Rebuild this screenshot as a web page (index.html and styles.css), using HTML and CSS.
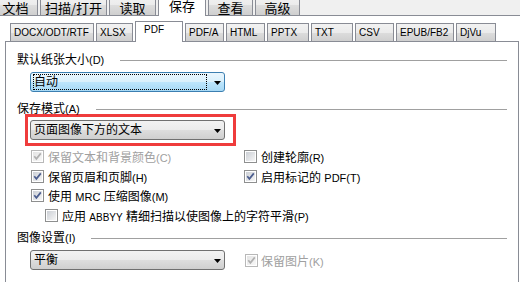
FILE: index.html
```html
<!DOCTYPE html>
<html lang="zh-CN">
<head>
    <meta charset="UTF-8">
    <title>选项 - 保存 - PDF</title>
    <link rel="stylesheet" href="styles.css">
</head>
<body>
    <div class="top-tabs">
        <div class="top-tab t-doc">文档</div>
        <div class="top-tab t-scan">扫描/打开</div>
        <div class="top-tab t-read">读取</div>
        <div class="top-tab t-save active">保存</div>
        <div class="top-tab t-view">查看</div>
        <div class="top-tab t-adv">高级</div>
    </div>

    <div class="sub-tabs">
        <div class="sub-tab s-docx">DOCX/ODT/RTF</div>
        <div class="sub-tab s-xlsx">XLSX</div>
        <div class="sub-tab s-pdf active">PDF</div>
        <div class="sub-tab s-pdfa">PDF/A</div>
        <div class="sub-tab s-html">HTML</div>
        <div class="sub-tab s-pptx">PPTX</div>
        <div class="sub-tab s-txt">TXT</div>
        <div class="sub-tab s-csv">CSV</div>
        <div class="sub-tab s-epub">EPUB/FB2</div>
        <div class="sub-tab s-djvu">DjVu</div>
    </div>

    <div class="panel">
        <div class="group-title title-paper"><span>默认纸张大小<span class="en">(D)</span></span></div>
        <div class="combo focused">
            <span class="combo-text"><span class="focus-rect">自动</span></span>
            <svg class="arrow" width="7" height="4" viewBox="0 0 7 4"><polygon points="0,0 7,0 3.5,4" fill="#000"/></svg>
        </div>

        <div class="group-title title-mode"><span>保存模式<span class="en">(A)</span></span></div>
        <div class="highlight">
            <div class="combo">
                <span class="combo-text">页面图像下方的文本</span>
                <svg class="arrow" width="7" height="4" viewBox="0 0 7 4"><polygon points="0,0 7,0 3.5,4" fill="#000"/></svg>
            </div>
        </div>

        <div class="options">
            <div class="col">
                <div class="check disabled">
                    <span class="box"><svg class="tick" width="9" height="9" viewBox="0 0 9 9"><path d="M1.3 4.2 L3.4 6.9 L7.8 1.4" fill="none" stroke="currentColor" stroke-width="1.7"/></svg></span>
                    <span>保留文本和背景颜色<span class="en">(C)</span></span>
                </div>
                <div class="check">
                    <span class="box"><svg class="tick" width="9" height="9" viewBox="0 0 9 9"><path d="M1.3 4.2 L3.4 6.9 L7.8 1.4" fill="none" stroke="currentColor" stroke-width="1.7"/></svg></span>
                    <span>保留页眉和页脚<span class="en">(H)</span></span>
                </div>
                <div class="check row-short">
                    <span class="box"><svg class="tick" width="9" height="9" viewBox="0 0 9 9"><path d="M1.3 4.2 L3.4 6.9 L7.8 1.4" fill="none" stroke="currentColor" stroke-width="1.7"/></svg></span>
                    <span>使用 <span class="en">MRC</span> 压缩图像<span class="en">(M)</span></span>
                </div>
                <div class="check nested">
                    <span class="box"></span>
                    <span>应用 <span class="en small">ABBYY</span> 精细扫描以使图像上的字符平滑<span class="en">(P)</span></span>
                </div>
            </div>
            <div class="col">
                <div class="check">
                    <span class="box"></span>
                    <span>创建轮廓<span class="en">(R)</span></span>
                </div>
                <div class="check">
                    <span class="box"><svg class="tick" width="9" height="9" viewBox="0 0 9 9"><path d="M1.3 4.2 L3.4 6.9 L7.8 1.4" fill="none" stroke="currentColor" stroke-width="1.7"/></svg></span>
                    <span>启用标记的 <span class="en">PDF(T)</span></span>
                </div>
            </div>
        </div>

        <div class="group-title title-image"><span>图像设置<span class="en">(I)</span></span></div>
        <div class="image-row">
            <div class="combo">
                <span class="combo-text">平衡</span>
                <svg class="arrow" width="7" height="4" viewBox="0 0 7 4"><polygon points="0,0 7,0 3.5,4" fill="#000"/></svg>
            </div>
            <div class="check disabled">
                <span class="box"><svg class="tick" width="9" height="9" viewBox="0 0 9 9"><path d="M1.3 4.2 L3.4 6.9 L7.8 1.4" fill="none" stroke="currentColor" stroke-width="1.7"/></svg></span>
                <span>保留图片<span class="en">(K)</span></span>
            </div>
        </div>
    </div>
</body>
</html>
```

FILE: styles.css
```css
body {
    margin: 0;
    width: 520px;
    height: 283px;
    overflow: hidden;
    background-color: #fff;
    color: #000;
    font-family: "Liberation Sans", "Noto Sans CJK SC", sans-serif;
    font-size: 12px;
}
.en {
    font-size: 11px;
}
.en.small {
    font-size: 10px;
}

/* top level tabs */
.top-tabs {
    display: flex;
    align-items: flex-end;
    gap: 2px;
    height: 15px;
    background-color: #f0f0f0;
    border-bottom: 1px solid #898c95;
}
.top-tab {
    box-sizing: border-box;
    flex: none;
    height: 20px;
    display: flex;
    align-items: flex-end;
    justify-content: center;
    border: 1px solid #898c95;
    border-bottom: none;
    background: linear-gradient(#f2f2f2, #ebebeb 50%, #dddddd 50%, #cfcfcf);
    font-family: "Noto Sans CJK SC", sans-serif;
    font-size: 13px;
    line-height: 15px;
}
.top-tab.active {
    height: 22px;
    margin-bottom: -1px;
    padding-bottom: 3px;
    background: #fff;
}
.t-doc { width: 45px; margin-left: -7px; }
.t-scan { width: 67px; }
.t-read { width: 47px; }
.t-save { width: 48px; }
.t-view { width: 45px; }
.t-adv { width: 45px; }

/* format tabs */
.sub-tabs {
    display: flex;
    align-items: flex-end;
    gap: 2px;
    height: 26px;
    margin-left: 5px;
    width: 514px;
    box-sizing: border-box;
    padding-left: 5px;
    border-bottom: 1px solid #898c95;
}
.sub-tab {
    box-sizing: border-box;
    flex: none;
    height: 18px;
    padding: 2px 0 1px 3px;
    border: 1px solid #898c95;
    border-bottom: none;
    background: linear-gradient(#f2f2f2, #ebebeb 50%, #dddddd 50%, #cfcfcf);
    font-size: 10px;
    line-height: 14px;
    white-space: nowrap;
    overflow: hidden;
}
.sub-tab.active {
    height: 21px;
    margin-bottom: -1px;
    padding: 1px 0 0 8px;
    background: #fff;
}
.s-docx { width: 84px; }
.s-xlsx { width: 37px; }
.s-pdf { width: 48px; }
.s-pdfa { width: 39px; }
.s-html { width: 39px; }
.s-pptx { width: 42px; }
.s-txt { width: 42px; }
.s-csv { width: 39px; }
.s-epub { width: 58px; }
.s-djvu { width: 40px; }

/* page body */
.panel {
    margin-left: 5px;
    width: 514px;
    height: 240px;
    box-sizing: border-box;
    border-left: 1px solid #898c95;
    border-right: 1px solid #898c95;
    padding: 12px 11px 0 11px;
}
.group-title {
    display: flex;
    align-items: center;
    gap: 16px;
    height: 12px;
    line-height: 12px;
    white-space: nowrap;
}
.group-title::after {
    content: "";
    flex: 1;
    border-top: 1px solid #a0a0a0;
}
.title-mode {
    margin-top: 11px;
}
.title-image {
    margin-top: 7px;
}

.combo {
    box-sizing: border-box;
    display: flex;
    align-items: center;
    width: 195px;
    height: 20px;
    margin: 6px 0 0 13px;
    padding: 0 3px 0 2px;
    border: 1px solid #707070;
    border-radius: 3px;
    background: linear-gradient(#f2f2f2, #ebebeb 50%, #dddddd 50%, #cfcfcf);
    line-height: 14px;
}
.combo.focused {
    border-color: #3c7fb1;
    background: linear-gradient(#eaf6fd, #d9f0fc 50%, #bee6fd 50%, #a7d9f5);
}
.combo-text {
    flex: 1;
    padding-left: 1px;
    white-space: nowrap;
}
.focus-rect {
    display: block;
    margin-right: 7px;
    border: 1px dotted #000;
    padding-left: 0;
    margin-left: -1px;
}
.arrow {
    flex: none;
    margin-top: 1px;
}

.highlight {
    box-sizing: border-box;
    width: 211px;
    margin: -1px 0 0 8px;
    padding: 3px 8px 3px 2px;
    border: 3px solid #ef3c3c;
}
.highlight .combo {
    margin: 0;
}

/* checkboxes */
.options {
    display: grid;
    grid-template-columns: 213px 1fr;
    padding-left: 14px;
}
.check {
    display: flex;
    align-items: center;
    gap: 4px;
    height: 20px;
    white-space: nowrap;
}
.check.row-short {
    height: 19px;
}
.check.nested {
    margin-left: 14px;
}
.check.disabled {
    color: #a0a0a0;
}
.box {
    box-sizing: border-box;
    flex: none;
    display: grid;
    width: 13px;
    height: 13px;
    padding: 1px;
    border: 1px solid #8e8f8f;
    background: #fff;
    color: #4b5d8e;
}
.box::before {
    content: "";
    grid-area: 1 / 1;
    background: linear-gradient(135deg, #cbcfd5, #f6f6f6);
}
.tick {
    grid-area: 1 / 1;
}
.disabled .box {
    border-color: #b8b8b8;
    color: #b0b0b0;
}
.disabled .box::before {
    background: linear-gradient(135deg, #e4e4e4, #f8f8f8);
}

.image-row {
    display: flex;
    align-items: center;
    gap: 20px;
    margin-top: 6px;
}
.image-row .combo {
    margin-top: 0;
}
.image-row .check {
    gap: 3px;
}
```
